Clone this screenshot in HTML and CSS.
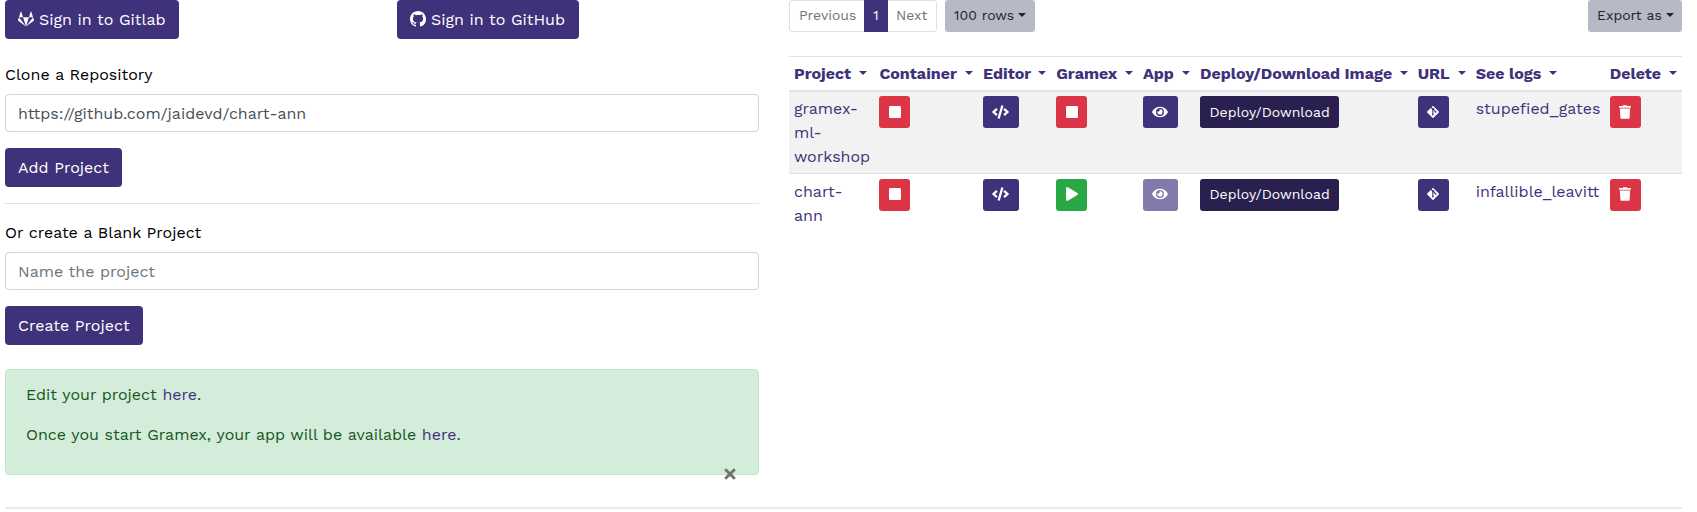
FILE: index.html
```
<!DOCTYPE html>
<html lang="en">
<head><meta charset="utf-8"><title>Projects</title><link rel="stylesheet" href="styles.css"></head>
<body>
<svg width="0" height="0" class="defs">
  <symbol id="stop" viewBox="0 0 448 512"><path d="M400 32H48C21.500 32 0 53.500 0 80v352c0 26.500 21.500 48 48 48h352c26.500 0 48-21.500 48-48V80c0-26.500-21.500-48-48-48z"/></symbol>
  <symbol id="play" viewBox="0 0 448 512"><path d="M424.400 214.700L72.400 6.600C43.800-10.300 0 6.100 0 47.900V464c0 37.500 40.700 60.100 72.400 41.300l352-208c31.400-18.500 31.500-64.100 0-82.600z"/></symbol>
  <symbol id="code" viewBox="0 0 640 512"><path d="M278.900 511.500l-61-17.700c-6.400-1.800-10-8.500-8.200-14.900L346.200 8.700c1.800-6.400 8.500-10 14.900-8.200l61 17.700c6.400 1.800 10 8.500 8.200 14.900L293.800 503.300c-1.900 6.400-8.500 10.100-14.900 8.200zm-114-112.200l43.500-46.400c4.600-4.900 4.300-12.700-.8-17.200L117 256l90.600-79.700c5.100-4.500 5.500-12.300.8-17.200l-43.500-46.400c-4.500-4.800-12.100-5.100-17-.5L3.800 247.200c-5.100 4.700-5.100 12.800 0 17.500l144.100 135.100c4.900 4.600 12.500 4.400 17-.5zm327.200.6l144.100-135.100c5.100-4.700 5.100-12.800 0-17.500L492.100 112.100c-4.800-4.500-12.400-4.300-17 .5L431.600 159c-4.600 4.900-4.300 12.700.8 17.200L523 256l-90.600 79.700c-5.100 4.500-5.500 12.300-.8 17.200l43.500 46.400c4.500 4.900 12.100 5.100 17 .6z"/></symbol>
  <symbol id="eye" viewBox="0 0 576 512"><path d="M572.520 241.400C518.290 135.590 410.930 64 288 64S57.680 135.640 3.480 241.410a32.350 32.350 0 0 0 0 29.190C57.710 376.410 165.070 448 288 448s230.320-71.640 284.520-177.410a32.350 32.350 0 0 0 0-29.190zM288 400a144 144 0 1 1 144-144 143.930 143.930 0 0 1-144 144zm0-240a95.310 95.310 0 0 0-25.310 3.790 47.850 47.850 0 0 1-66.900 66.900A95.780 95.780 0 1 0 288 160z"/></symbol>
  <symbol id="git" viewBox="0 0 448 512"><path fill-rule="evenodd" d="M203 40Q224 24 245 40L440 235Q456 256 440 277L245 472Q224 488 203 472L8 277Q-8 256 8 235L140 103L181 145Q178 168 198 181V318A34 34 0 1 0 238 318V193L286 241A34 34 0 1 0 312 215L263 166A34 34 0 0 0 214 117L170 73Z"/></symbol>
  <symbol id="trash" viewBox="0 0 448 512"><path d="M432 32H312l-9.400-18.700A24 24 0 0 0 281.100 0H166.800a23.720 23.720 0 0 0-21.400 13.300L136 32H16A16 16 0 0 0 0 48v32a16 16 0 0 0 16 16h416a16 16 0 0 0 16-16V48a16 16 0 0 0-16-16zM32 128l21.200 339a48 48 0 0 0 47.900 45h245.800a48 48 0 0 0 47.900-45L416 128z"/></symbol>
</svg>
<main class="page">
  <section class="left">
    <div class="signin">
      <div><a class="btn"><svg class="brand" viewBox="0 0 512 512"><path d="M105.200 24.900c-3.100-8.900-15.700-8.900-18.900 0L29.800 199.700h132L105.200 24.900zM.9 287.700c-2.600 8 .3 16.900 7.100 22l247.900 184-226.200-294L.9 287.700zm160.800-88l94.300 294 94.300-294H161.700zm349.400 88l-28.800-88-226.300 294 247.900-184c6.900-5.100 9.700-14 7.200-22zM425.700 24.900c-3.100-8.900-15.700-8.900-18.900 0l-56.600 174.800h132L425.700 24.900z"/></svg>Sign in to Gitlab</a></div>
      <div><a class="btn"><svg class="brand" viewBox="0 0 16 16"><path d="M8 0C3.580 0 0 3.580 0 8c0 3.540 2.290 6.530 5.470 7.590.4.070.55-.17.55-.38 0-.19-.01-.82-.01-1.490-2.010.37-2.530-.49-2.690-.94-.09-.23-.48-.94-.82-1.130-.28-.15-.68-.52-.01-.53.63-.01 1.080.58 1.230.82.72 1.210 1.870.87 2.330.66.07-.52.28-.87.51-1.070-1.780-.2-3.640-.89-3.640-3.950 0-.87.31-1.590.82-2.150-.08-.2-.36-1.020.08-2.120 0 0 .67-.21 2.200.82a7.600 7.600 0 0 1 4 0c1.530-1.040 2.200-.82 2.200-.82.44 1.100.16 1.920.08 2.120.51.56.82 1.270.82 2.150 0 3.070-1.870 3.750-3.650 3.950.29.25.54.73.54 1.480 0 1.070-.01 1.930-.01 2.200 0 .21.150.46.55.38A8.010 8.010 0 0 0 16 8c0-4.420-3.580-8-8-8z"/></svg>Sign in to GitHub</a></div>
    </div>
    <label>Clone a Repository</label>
    <input class="field" value="https://github.com/jaidevd/chart-ann">
    <button class="btn">Add Project</button>
    <hr>
    <label>Or create a Blank Project</label>
    <input class="field" placeholder="Name the project">
    <button class="btn">Create Project</button>
    <div class="alert">
      <p>Edit your project <a>here</a>.</p>
      <p>Once you start Gramex, your app will be available <a>here</a>.</p>
      <span class="close"><svg viewBox="0 0 12 12"><path d="M1.200 1.200l9.600 9.600M10.800 1.200l-9.600 9.600"/></svg></span>
    </div>
  </section>
  <section class="right">
    <div class="tools">
      <div class="pager"><span>Previous</span><span class="current">1</span><span>Next</span></div>
      <button class="drop rows"><span>100 rows</span><i class="caret"></i></button>
      <button class="drop export"><span>Export as</span><i class="caret"></i></button>
    </div>
    <table>
      <colgroup><col class="c1"><col class="c2"><col class="c3"><col class="c4"><col class="c5"><col class="c6"><col class="c7"><col class="c8"><col class="c9"></colgroup>
      <thead><tr>
        <th><div class="project"><span>Project</span><i class="caret"></i></div></th>
        <th><div><span>Container</span><i class="caret"></i></div></th>
        <th><div><span>Editor</span><i class="caret"></i></div></th>
        <th><div><span>Gramex</span><i class="caret"></i></div></th>
        <th><div><span>App</span><i class="caret"></i></div></th>
        <th><div><span>Deploy/Download Image</span><i class="caret"></i></div></th>
        <th><div><span>URL</span><i class="caret"></i></div></th>
        <th><div class="logs"><span>See logs</span><i class="caret"></i></div></th>
        <th><div><span>Delete</span><i class="caret"></i></div></th>
      </tr></thead>
      <tbody>
        <tr class="striped">
          <td>gramex-<br>ml-<br>workshop</td>
          <td><a class="sm red"><svg class="w12"><use href="#stop"/></svg></a></td>
          <td><a class="sm"><svg class="w18"><use href="#code"/></svg></a></td>
          <td><a class="sm red"><svg class="w12"><use href="#stop"/></svg></a></td>
          <td><a class="sm"><svg class="w16"><use href="#eye"/></svg></a></td>
          <td><a class="sm dark">Deploy/Download</a></td>
          <td><a class="sm"><svg class="w12"><use href="#git"/></svg></a></td>
          <td>stupefied_gates</td>
          <td><a class="sm red"><svg class="w12"><use href="#trash"/></svg></a></td>
        </tr>
        <tr class="plain">
          <td>chart-<br>ann</td>
          <td><a class="sm red"><svg class="w12"><use href="#stop"/></svg></a></td>
          <td><a class="sm"><svg class="w18"><use href="#code"/></svg></a></td>
          <td><a class="sm green"><svg class="w12"><use href="#play"/></svg></a></td>
          <td><a class="sm faded"><svg class="w16"><use href="#eye"/></svg></a></td>
          <td><a class="sm dark">Deploy/Download</a></td>
          <td><a class="sm"><svg class="w12"><use href="#git"/></svg></a></td>
          <td>infallible_leavitt</td>
          <td><a class="sm red"><svg class="w12"><use href="#trash"/></svg></a></td>
        </tr>
      </tbody>
    </table>
  </section>
</main>
<hr class="bottom">
</body>
</html>
```
FILE: styles.css
```
* { box-sizing: border-box; }
body { margin: 0; height: 512px; overflow: hidden; background: #fff; color: #000; font: 16px/24px "Work Sans", Inter, "Noto Sans", sans-serif; }
.defs { display: none; }
svg { fill: #fff; flex: none; }
button, input { font: inherit; margin: 0; word-spacing: inherit; }
.page { display: flex; gap: 30px; height: 507px; padding-left: 5px; }
.left { width: 754px; display: flex; flex-direction: column; align-items: flex-start; word-spacing: .2px; }
.right { width: 893px; }
.signin { display: grid; grid-template-columns: 392px 1fr; width: 100%; height: 39px; margin-bottom: 24px; }
.btn { display: inline-flex; align-items: center; height: 39px; padding: 0 13.500px 0 13px; border: 0; border-radius: 4px; background: #3f327b; color: #fff; white-space: nowrap; }
.brand { width: 16px; height: 16px; margin: 0 5px 1px 0; }
label { height: 24px; margin-bottom: 7px; }
.field { width: 100%; height: 38px; padding: 1px 12px 0; margin-bottom: 16px; border: 1px solid #ced4da; border-radius: 4px; color: #495057; background: #fff; outline: 0; }
.field::placeholder { color: #6c757d; opacity: 1; }
hr { width: 100%; height: 1px; border: 0; margin: 16px 0 17px; background: #e3e3e3; }
.alert { position: relative; width: 100%; height: 106px; margin-top: 24px; padding: 13px 20px; background: #d4edda; border: 1px solid #c3e6cb; border-radius: 4px; color: #155724; }
.alert p { margin: 0 0 16px; }
.alert a { color: #3f327b; }
.close { position: absolute; right: 22px; bottom: -6px; width: 12px; height: 12px; }
.close svg { display: block; width: 12px; height: 12px; fill: none; stroke: #6c756e; stroke-width: 2.900; }
.bottom { height: 2px; width: 1677px; margin: 0 0 0 5px; background: #ebebeb; }
.tools { display: flex; height: 32px; margin-bottom: 24px; font-size: 14px; line-height: 28px; }
.pager { display: flex; width: 148px; height: 32px; border: 1px solid #dee2e6; border-radius: 3px; color: #6c757d; }
.pager span:first-child { width: 74px; padding-left: 9px; }
.pager span:last-child { padding-left: 8px; }
.pager .current { width: 24px; height: 32px; margin-top: -1px; padding-top: 1px; text-align: center; background: #3f327b; color: #fff; }
.drop { display: flex; align-items: center; gap: 4px; height: 32px; padding: 0 9px 2px; border: 0; border-radius: 3px; background: #b8b9c7; color: #212529; white-space: nowrap; }
.rows { width: 90px; margin-left: 8px; }
.export { width: 94px; margin-left: auto; }
.caret { width: 0; height: 0; flex: none; border: 4px solid transparent; border-top-color: currentColor; border-bottom: 0; }
table { width: 893px; table-layout: fixed; border-collapse: separate; border-spacing: 0; color: #3f327b; }
.c1 { width: 85.400px; } .c2 { width: 103.600px; } .c3 { width: 73.300px; } .c4 { width: 86.700px; } .c5 { width: 57px; }
.c6 { width: 217.700px; } .c7 { width: 58px; } .c8 { width: 134px; } .c9 { width: 77.300px; }
th { height: 36px; padding: 0 5px; border-top: 1px solid #dee2e6; border-bottom: 2px solid #dee2e6; text-align: left; white-space: nowrap; }
th div { display: flex; align-items: center; justify-content: space-between; height: 33px; }
th .caret { border-width: 4px 4px 0; margin-bottom: 2px; }
th .project { padding-right: 2px; }
th .logs { justify-content: flex-start; gap: 8px; }
td { height: 81px; padding: 5px 5px 4px; vertical-align: top; white-space: nowrap; }
.striped td { background: #f2f2f2; border-bottom: 1px solid #dee2e6; height: 82px; }
.plain td { padding-top: 6px; }
.sm { display: inline-flex; align-items: center; height: 32px; padding: 0 9.500px; margin-top: -1px; border-radius: 3px; background: #3f327b; color: #fff; font-size: 14px; vertical-align: top; }
.plain .sm { padding-bottom: 2px; }
.sm svg { height: 14px; }
.w12 { width: 12px; } .w16 { width: 16px; } .w18 { width: 17px; }
.red { background: #dc3545; }
.green { background: #28a745; }
.dark { background: #2a2050; }
.faded { background: #8379aa; }
```
